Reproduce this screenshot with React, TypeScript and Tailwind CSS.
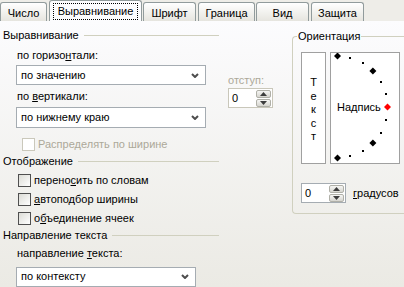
import React from 'react';

// Excel "Формат ячеек" – вкладка "Выравнивание" (XP look)

function Tab({ label, className }: { label: string; className: string }) {
  return (
    <div
      className={`flex h-[19px] items-center justify-center rounded-t-[3px] border border-b-0 border-[#919b9c] bg-linear-to-b from-white to-[#e6e5df] pt-[2px] ${className}`}
    >
      {label}
    </div>
  );
}

function GroupTitle({ title, className }: { title: string; className: string }) {
  return (
    <div className={`flex h-[13px] items-center ${className}`}>
      <span className="ml-[3px] mr-[5px] whitespace-nowrap">{title}</span>
      <div className="h-px flex-1 bg-[#d0d0bf]" />
    </div>
  );
}

function Label({ children, className }: { children: React.ReactNode; className: string }) {
  return <div className={`h-[13px] whitespace-nowrap ${className}`}>{children}</div>;
}

function Chevron() {
  return (
    <svg width="8" height="5" viewBox="0 0 8 5">
      <path d="M1 1 L4 4 L7 1" fill="none" stroke="#4d4d4d" strokeWidth="2" />
    </svg>
  );
}

function Select({ value, className }: { value: string; className: string }) {
  return (
    <div
      className={`ml-[16px] flex h-[21px] items-center justify-between border border-[#a5acb2] bg-white pl-[4px] pr-[6px] ${className}`}
    >
      <span>{value}</span>
      <Chevron />
    </div>
  );
}

function Check({
  children,
  disabled,
  className,
}: {
  children: React.ReactNode;
  disabled?: boolean;
  className: string;
}) {
  return (
    <div className={`flex h-[13px] items-center whitespace-nowrap ${className}`}>
      <div
        className={
          disabled
            ? 'h-[13px] w-[13px] shrink-0 border border-[#cac8bb] bg-white'
            : 'h-[13px] w-[13px] shrink-0 border border-[#4f4f4f] bg-linear-to-br from-[#dcdcd6] to-white'
        }
      />
      <span className={disabled ? 'ml-[3px] text-[#aca899]' : 'ml-[3px]'}>{children}</span>
    </div>
  );
}

function SpinBtn({ up }: { up?: boolean }) {
  return (
    <div className="flex h-[8px] w-[15px] items-center justify-center rounded-[2px] border border-[#b0b0a8] bg-linear-to-b from-[#f6f6f4] to-[#d6d5cf]">
      <svg width="7" height="4" viewBox="0 0 7 4">
        <path d={up ? 'M0 4 L3.5 0 L7 4 Z' : 'M0 0 L3.5 4 L7 0 Z'} fill="#3c3c3c" />
      </svg>
    </div>
  );
}

function Spin({ disabled, className }: { disabled?: boolean; className: string }) {
  return (
    <div
      className={`flex h-[20px] w-[45px] shrink-0 items-center justify-between bg-white pl-[3px] pr-px border ${
        disabled ? 'border-[#c9c7ba]' : 'border-[#a5acb2]'
      } ${className}`}
    >
      <span>0</span>
      <div className="flex flex-col gap-px">
        <SpinBtn up />
        <SpinBtn />
      </div>
    </div>
  );
}

function Dial() {
  const cx = 6.5;
  const cy = 54;
  const marks = [];
  for (let a = -90; a <= 90; a += 15) {
    const r = (a * Math.PI) / 180;
    const x = cx + 50 * Math.cos(r);
    const y = cy - 51 * Math.sin(r);
    if (a % 45 === 0) {
      marks.push(
        <polygon
          key={a}
          points={`${x},${y - 3.5} ${x + 3.5},${y} ${x},${y + 3.5} ${x - 3.5},${y}`}
          fill={a === 0 ? '#ff0000' : '#000000'}
        />
      );
    } else {
      marks.push(
        <rect key={a} x={Math.round(x) - 1} y={Math.round(y) - 1} width="2" height="2" fill="#000000" />
      );
    }
  }
  return (
    <div className="relative h-[112px] w-[70px] border border-[#a0a0a0] bg-white">
      <svg width="68" height="110" viewBox="0 0 68 110">
        {marks}
      </svg>
      <span className="absolute left-[6px] top-[48px] leading-[13px]">Надпись</span>
    </div>
  );
}

export default function App() {
  return (
    <div className="h-[287px] w-[404px] overflow-hidden bg-[#eeede8] font-['Liberation_Sans',Arial,sans-serif] text-[11px] leading-[13px] text-black">
      {/* tabs */}
      <div className="flex h-[21px] items-end">
        <Tab label="Число" className="w-[47px]" />
        <div className="ml-[2px] flex h-[21px] w-[93px] items-center justify-center rounded-t-[3px] border border-b-0 border-[#919b9c] bg-[#fcfcfe]">
          <span className="flex h-[17px] w-[85px] items-center justify-center border border-dotted border-black">
            Выравнивание
          </span>
        </div>
        <Tab label="Шрифт" className="ml-px w-[53px]" />
        <Tab label="Граница" className="ml-[2px] w-[57px]" />
        <Tab label="Вид" className="ml-px w-[53px]" />
        <Tab label="Защита" className="ml-[2px] w-[53px]" />
      </div>

      {/* page */}
      <div className="flex h-[266px] bg-linear-to-b from-[#fcfcfe] to-[#ebeae4]">
        <div className="flex w-[219px] shrink-0 flex-col">
          <GroupTitle title="Выравнивание" className="mt-[8px]" />
          <Label className="ml-[17px] mt-[7px]">
            по горизо<u>н</u>тали:
          </Label>
          <Select value="по значению" className="mt-[3px] w-[190px]" />
          <Label className="ml-[17px] mt-[5px]">
            по <u>в</u>ертикали:
          </Label>
          <Select value="по нижнему краю" className="mt-[4px] w-[190px]" />
          <Check disabled className="ml-[22px] mt-[10px]">
            Распределять по ширине
          </Check>

          <GroupTitle title="Отображение" className="mt-[4px]" />
          <Check className="ml-[18px] mt-[6px]">
            перено<u>с</u>ить по словам
          </Check>
          <Check className="ml-[18px] mt-[6px]">
            <u>а</u>втоподбор ширины
          </Check>
          <Check className="ml-[18px] mt-[6px]">
            о<u>б</u>ъединение ячеек
          </Check>

          <GroupTitle title="Направление текста" className="mt-[4px]" />
          <Label className="ml-[17px] mt-[5px]">
            направление <u>т</u>екста:
          </Label>
          <Select value="по контексту" className="mt-[7px] w-[180px]" />
        </div>

        <div className="flex w-[73px] shrink-0 flex-col pl-[9px]">
          <Label className="mt-[53px] text-[#aca899]">отступ:</Label>
          <Spin disabled className="mt-px" />
        </div>

        <fieldset className="mt-[9px] h-[184px] w-[116px] shrink-0 rounded-l-[4px] border border-r-0 border-[#d0d0bf] p-0">
          <legend className="ml-[4px] px-px leading-[13px]">Ориентация</legend>
          <div className="ml-[8px] mt-[9px] flex gap-[4px]">
            <div className="flex h-[112px] w-[25px] flex-col items-center border border-[#a0a0a0] bg-white pt-[23px] leading-[13.5px]">
              <span>Т</span>
              <span>е</span>
              <span>к</span>
              <span>с</span>
              <span>т</span>
            </div>
            <Dial />
          </div>
          <div className="ml-[8px] mt-[19px] flex items-center">
            <Spin className="" />
            <span className="ml-[7px]">
              <u>г</u>радусов
            </span>
          </div>
        </fieldset>
      </div>
    </div>
  );
}
